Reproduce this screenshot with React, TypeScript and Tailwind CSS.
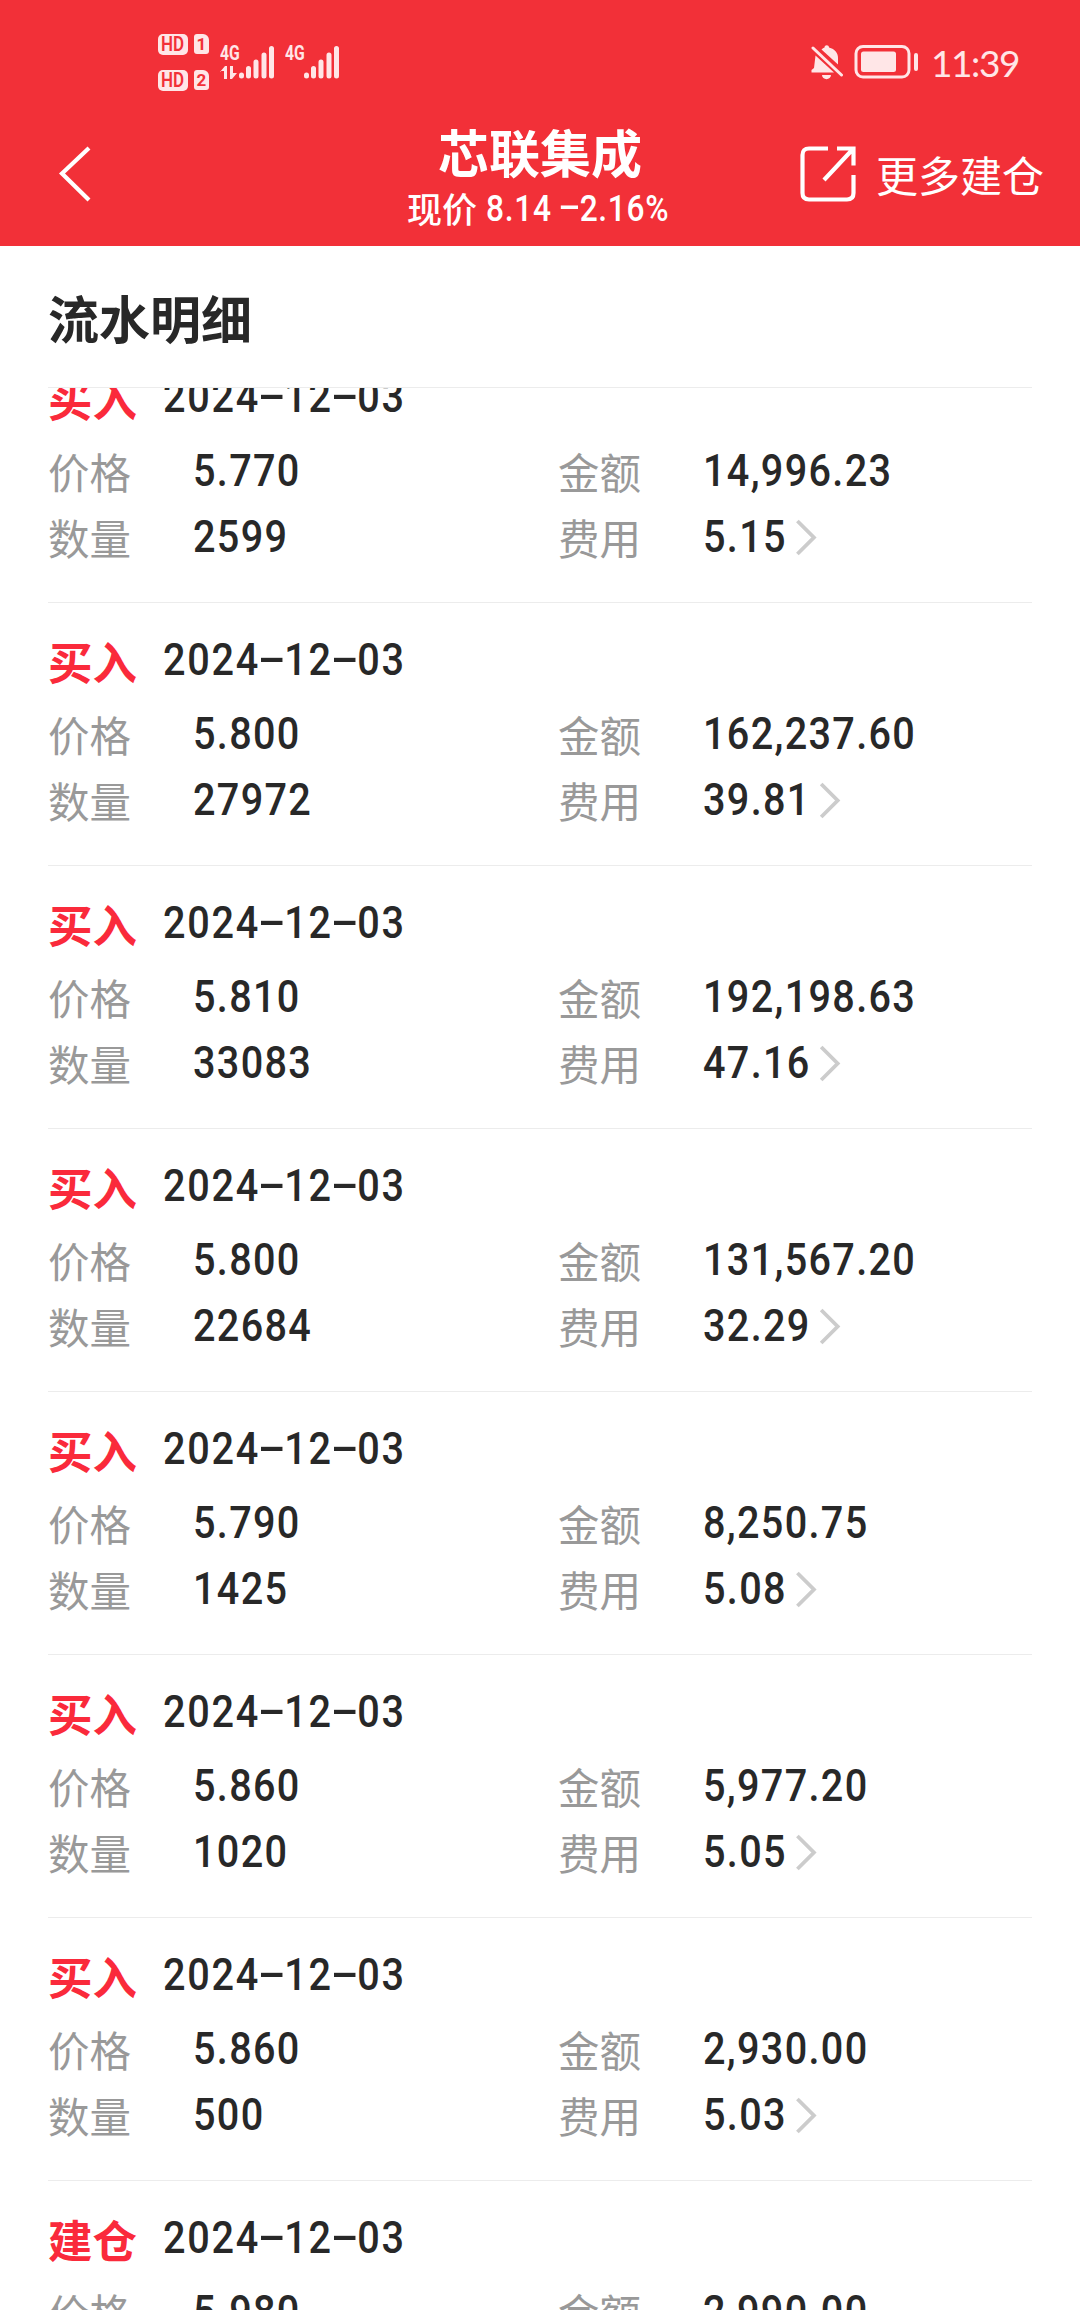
import { clsx } from "clsx"

type Trade = {
  kind: string
  date: string
  price: string
  amount: string
  quantity: string
  fee: string
}

const TRADES: Trade[] = [
  { kind: "买入", date: "2024-12-03", price: "5.770", amount: "14,996.23", quantity: "2599", fee: "5.15" },
  { kind: "买入", date: "2024-12-03", price: "5.800", amount: "162,237.60", quantity: "27972", fee: "39.81" },
  { kind: "买入", date: "2024-12-03", price: "5.810", amount: "192,198.63", quantity: "33083", fee: "47.16" },
  { kind: "买入", date: "2024-12-03", price: "5.800", amount: "131,567.20", quantity: "22684", fee: "32.29" },
  { kind: "买入", date: "2024-12-03", price: "5.790", amount: "8,250.75", quantity: "1425", fee: "5.08" },
  { kind: "买入", date: "2024-12-03", price: "5.860", amount: "5,977.20", quantity: "1020", fee: "5.05" },
  { kind: "买入", date: "2024-12-03", price: "5.860", amount: "2,930.00", quantity: "500", fee: "5.03" },
  { kind: "建仓", date: "2024-12-03", price: "5.980", amount: "2,990.00", quantity: "500", fee: "5.03" },
]

// Condensed figures, set a little loose.
const NUM = "font-['Roboto','Noto_Sans_CJK_SC',sans-serif] font-medium whitespace-nowrap origin-left scale-x-88"

// Hyphens are stretched to the width of a digit, as in DIN-style faces.
function Figures({ text }: { text: string }) {
  return text.split("-").map((part, i) => (
    <span key={i}>
      {i > 0 && (
        <span className="inline-block w-[0.613em] -translate-y-[2px] scale-x-[2.1] text-center tracking-normal">-</span>
      )}
      {part}
    </span>
  ))
}

function HdBadge({ sim }: { sim: string }) {
  return (
    <div className="flex h-[22px] items-center gap-[6px] text-[#f23038]">
      <span className="flex h-[21px] w-[30px] items-center justify-center rounded-[5px] bg-[#ffe6e7]">
        <span className="scale-x-85 text-[20px] leading-none font-semibold">HD</span>
      </span>
      <span className="flex h-[20px] w-[15px] items-center justify-center rounded-[3px] rounded-tr-[6px] bg-[#ffe6e7] text-[17px] leading-none font-bold">
        {sim}
      </span>
    </div>
  )
}

function Signal({ data }: { data?: boolean }) {
  return (
    <div className="relative h-[36px] w-[56px]">
      <span className="absolute -top-[1px] left-0 origin-left scale-x-75 text-[21px] leading-[21px] font-bold">4G</span>
      <svg className="absolute inset-0" width="56" height="36" viewBox="0 0 56 36">
        <g stroke="#ffe6e7" strokeWidth="5" strokeLinecap="round">
          <path d="M21.500 31v1M28.500 24.500v7.500M36 18v14M44 11v21M51.500 4.500v27.500" />
        </g>
        {data && <path d="M0 28l5-6h2v13H4v-8H0zM10 22h3v7h4l-5 6h-2z" fill="#ffe6e7" />}
      </svg>
    </div>
  )
}

function StatusBar() {
  return (
    <div className="flex h-[110px] justify-between pt-[33px] pr-[61px] pl-[158px] text-[#ffe6e7]">
      <div className="flex font-['Roboto',sans-serif]">
        <div className="mr-[11px] flex flex-col gap-[14px]">
          <HdBadge sim="1" />
          <HdBadge sim="2" />
        </div>
        <div className="mt-[11px] flex gap-[9px]">
          <Signal data />
          <Signal />
        </div>
      </div>
      <div className="flex h-[58px] items-start">
        <svg className="mt-[12px]" width="34" height="36" viewBox="0 0 34 36">
          <path
            d="M4.500 10.500L23 27.500H0.500V25L3 23zM10.500 4.500C11.500 3.500 12.500 3 13.500 2.500C13.500-.500 18-.500 18 2.500C24 4 27 8 27 13V19.500zM11 30h9c0 5.500-9 5.500-9 0z"
            fill="#ffe6e7"
          />
          <path d="M2 3l28.500 27" stroke="#ffe6e7" strokeWidth="3" strokeLinecap="round" />
        </svg>
        <svg className="mt-[12px] ml-[9px]" width="66" height="34" viewBox="0 0 66 34">
          <rect x="2" y="1.500" width="53" height="30.500" rx="7" fill="none" stroke="#ffe6e7" strokeWidth="3" />
          <rect x="7" y="6.500" width="35" height="20.500" rx="2.500" fill="#ffe6e7" />
          <rect x="60" y="8" width="4" height="18" rx="2" fill="#ffe6e7" />
        </svg>
        <span className="mt-[9px] ml-[11px] font-['Lato',sans-serif] text-[37px] leading-[42px] tracking-[-1.400px]">11:39</span>
      </div>
    </div>
  )
}

function NavBar() {
  return (
    <div className="grid h-[136px] grid-cols-[1fr_300px_1fr] text-white">
      <svg className="mt-[35px] ml-[58px]" width="34" height="58" viewBox="0 0 34 58">
        <path d="M31 3L4 28.500l27 26.500" fill="none" stroke="currentColor" strokeWidth="4.200" />
      </svg>
      <div className="flex flex-col items-center whitespace-nowrap">
        <h1 className="mt-[13px] text-[51px] leading-[56px] font-bold">芯联集成</h1>
        <div className="mt-[3px] flex text-[35px] leading-[52px] font-medium">
          <span>现价</span>
          <span className={clsx(NUM, "ml-[9px] w-[187px] pt-[1px] text-[36px] tracking-[0.800px]")}>
            8.14 <Figures text="-2.16%" />
          </span>
        </div>
      </div>
      <div className="flex items-start justify-end pr-[36px]">
        <svg className="mt-[36px]" width="56" height="56" viewBox="0 0 56 56" fill="none" stroke="currentColor" strokeWidth="4.200">
          <path d="M28 2.500H9Q2.500 2.500 2.500 9v38q0 6.500 6.500 6.500h38q6.500 0 6.500-6.500V29M37 2.500h16.500v17M53 3L24 34" />
        </svg>
        <span className="mt-[34px] ml-[20px] text-[42px] leading-[60px] whitespace-nowrap">更多建仓</span>
      </div>
    </div>
  )
}

function Field({ label, value, arrow }: { label: string; value: string; arrow?: boolean }) {
  return (
    <div className="flex h-[66px] items-start">
      <span className="w-[145px] pt-[1px] text-[41.500px] leading-[60px] text-[#999]">{label}</span>
      <span className={clsx(NUM, "flex pt-[1px] text-[45px] leading-[60px] tracking-[1.500px]")}>
        {value}
        {arrow && (
          <svg className="mt-[12px] ml-[10px]" width="25" height="38" viewBox="0 0 22 38" preserveAspectRatio="none">
            <path d="M2 2l16.500 16.500L2 35" fill="none" stroke="#ccc" strokeWidth="3.800" />
          </svg>
        )}
      </span>
    </div>
  )
}

function TradeRow({ trade }: { trade: Trade }) {
  return (
    <li className="h-[263px] shrink-0 border-b border-[#ececec] pt-[24px]">
      <div className="flex h-[76px] items-start">
        <span className="w-[115px] pt-[4px] text-[44.500px] leading-[60px] font-bold text-[#fa2a3b]">{trade.kind}</span>
        <span className={clsx(NUM, "pt-[3px] text-[45px] leading-[60px] tracking-[2px]")}>
          <Figures text={trade.date} />
        </span>
      </div>
      <div className="grid grid-cols-[510px_1fr]">
        <Field label="价格" value={trade.price} />
        <Field label="金额" value={trade.amount} />
        <Field label="数量" value={trade.quantity} />
        <Field label="费用" value={trade.fee} arrow />
      </div>
    </li>
  )
}

export default function App() {
  return (
    <div className="flex h-[2310px] w-[1080px] flex-col overflow-hidden bg-white font-['Noto_Sans_CJK_SC',sans-serif] text-[#282828]">
      <header className="h-[246px] shrink-0 bg-[#f23038]">
        <StatusBar />
        <NavBar />
      </header>
      <main className="flex min-h-0 flex-1 flex-col px-[48px]">
        <h2 className="h-[142px] shrink-0 border-b border-[#ececec] pt-[35px] text-[51px] leading-[72px] font-bold">流水明细</h2>
        {/* the list is scrolled, so its first row starts under the heading */}
        <div className="min-h-0 flex-1 overflow-hidden">
          <ul className="-mt-[48px] flex flex-col">
            {TRADES.map((trade, i) => (
              <TradeRow key={i} trade={trade} />
            ))}
          </ul>
        </div>
      </main>
    </div>
  )
}
